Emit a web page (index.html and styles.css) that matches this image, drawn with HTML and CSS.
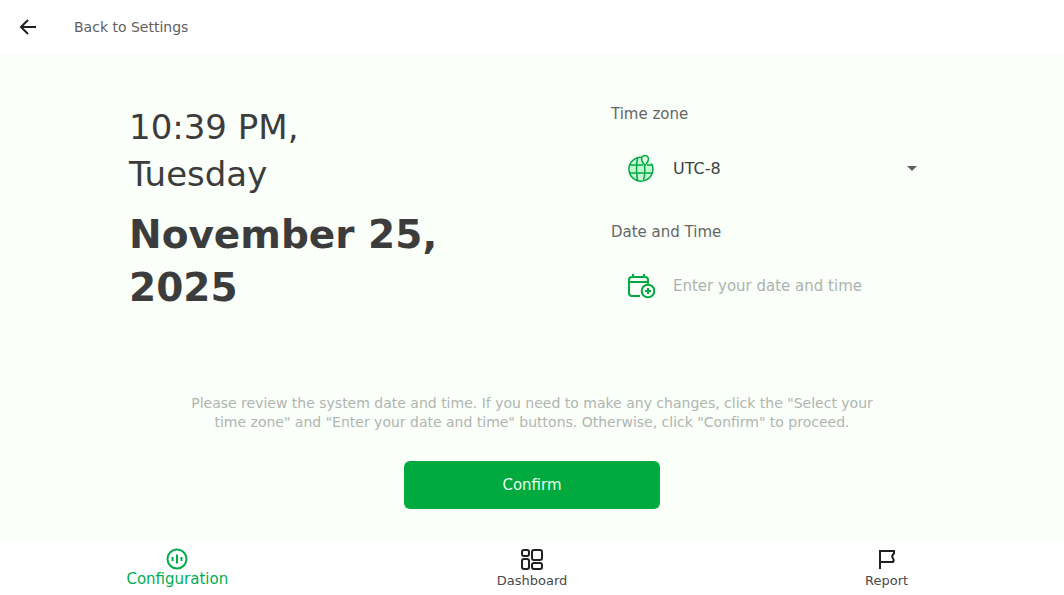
FILE: index.html
```html
<!DOCTYPE html>
<html lang="en">
<head>
<meta charset="utf-8">
<meta name="viewport" content="width=device-width, initial-scale=1">
<title>Date and Time</title>
<link rel="stylesheet" href="styles.css">
</head>
<body>
<header class="topbar">
  <a class="back" href="#">
    <svg class="back-icon" viewBox="0 0 18 18" aria-hidden="true"><path d="M17 9H2M9 2L2 9l7 7"/></svg>
    <span>Back to Settings</span>
  </a>
</header>
<main class="content">
  <div class="columns">
    <section class="clock">
      <p class="clock-time">10:39 PM,<br>Tuesday</p>
      <h1 class="clock-date">November 25,<br>2025</h1>
    </section>
    <form class="fields">
      <div class="field">
        <label class="label" for="zone">Time zone</label>
        <div class="control">
          <svg class="icon" viewBox="0 0 28 28" aria-hidden="true">
            <circle class="tint" cx="14" cy="15" r="12"/>
            <path d="M15 3.200A12 12 0 1 0 24.500 9.500M3 11h13M20 11h5M3 19h22M10.500 4Q8.500 15 10.500 26M17.500 12Q18.500 20 16.500 26"/>
            <path class="pin" d="M18 11.500C16 9 14.500 7.500 14.500 5a3.500 3.500 0 0 1 7 0C21.500 7.500 20 9 18 11.500Z"/>
          </svg>
          <select class="input zone" id="zone"><option>UTC-8</option></select>
          <svg class="caret" viewBox="0 0 10 5" aria-hidden="true"><path d="M0 0h10L5 5z"/></svg>
        </div>
      </div>
      <div class="field">
        <label class="label" for="when">Date and Time</label>
        <div class="control">
          <svg class="icon" viewBox="0 0 28 28" aria-hidden="true">
            <path class="bold" d="M13 24H5q-3 0-3-3V8q0-3 3-3h13q3 0 3 3v4M2 10h19M6 2v3M17 2v3"/>
            <circle class="bold" cx="21" cy="19" r="6.300"/>
            <path class="bold" d="M18 19h6M21 16v6"/>
          </svg>
          <input class="input" id="when" type="text" placeholder="Enter your date and time">
        </div>
      </div>
    </form>
  </div>
  <p class="hint">Please review the system date and time. If you need to make any changes, click the "Select your<br>time zone" and "Enter your date and time" buttons. Otherwise, click "Confirm" to proceed.</p>
  <button class="confirm" type="button">Confirm</button>
</main>
<nav class="tabs" aria-label="Main">
  <a class="tab active" href="#" aria-current="page">
    <svg class="tab-icon" viewBox="0 0 22 22" aria-hidden="true"><circle cx="11" cy="11" r="9.500"/><path d="M6.500 9v4M11 6.500v9M15.500 9v4"/></svg>
    <span>Configuration</span>
  </a>
  <a class="tab" href="#">
    <svg class="tab-icon" viewBox="0 0 22 22" aria-hidden="true"><rect x="1" y="2" width="7" height="6" rx="2"/><rect x="11" y="2" width="10" height="10" rx="2"/><rect x="1" y="11" width="7" height="10" rx="2"/><rect x="11" y="15" width="10" height="6" rx="2"/></svg>
    <span>Dashboard</span>
  </a>
  <a class="tab" href="#">
    <svg class="tab-icon" viewBox="0 0 22 22" aria-hidden="true"><path d="M4 21V3H18V5.500Q15.500 7.500 16.500 9.500Q18.500 12 17 14H4"/></svg>
    <span>Report</span>
  </a>
</nav>
</body>
</html>
```
FILE: styles.css
```css
* { box-sizing: border-box; }

body {
  display: flex;
  flex-direction: column;
  min-height: 100vh;
  margin: 0;
  background: #fff;
  color: #3c3c3c;
  font-family: "DejaVu Sans", sans-serif;
}

p, h1 { margin: 0; }
a { color: inherit; text-decoration: none; }

svg {
  flex: none;
  fill: none;
  stroke: currentColor;
  stroke-width: 2;
}

.topbar {
  display: flex;
  align-items: center;
  height: 54px;
  padding: 0 19px;
}

.back {
  display: flex;
  align-items: center;
  gap: 37px;
  color: #606060;
  font-size: 14px;
}

.back-icon { width: 18px; height: 18px; color: #202020; }

.content {
  flex: 1;
  display: flex;
  flex-direction: column;
  align-items: center;
  padding: 50px 0 33px;
  background: #fafffa;
}

.columns {
  display: grid;
  grid-template-columns: 482fr 453fr;
  width: 100%;
  padding-left: 129px;
}

.clock-time { font-size: 34px; line-height: 47px; }
.clock-date { margin-top: 10px; font-size: 39px; line-height: 53px; }

.fields {
  display: flex;
  flex-direction: column;
  gap: 28px;
  width: 70%;
  color: #666;
}

.label { display: block; margin-bottom: 18px; font-size: 15px; line-height: 20px; }

.control {
  display: flex;
  align-items: center;
  gap: 18px;
  height: 52px;
  padding: 0 11px 0 16px;
}

.icon { width: 28px; height: 28px; color: #00aa40; stroke-width: 1.500; }
.tint { fill: #c4f5d5; stroke: none; }
.pin { fill: #dcfbe5; }
.bold { stroke-width: 2; }

.input {
  flex: 1;
  min-width: 0;
  padding: 0;
  border: 0;
  outline: 0;
  background: transparent;
  color: #404040;
  font-family: inherit;
  font-size: 15px;
}

.zone { appearance: none; font-size: 16px; }
.input::placeholder { color: #adb3ad; opacity: 1; }
.caret { width: 10px; height: 5px; margin-left: -18px; fill: #606060; stroke: none; pointer-events: none; }

.hint {
  margin-top: auto;
  color: #b0b5b0;
  font-size: 14px;
  line-height: 19px;
  text-align: center;
}

.confirm {
  width: 24%;
  height: 48px;
  margin-top: 29px;
  border: 0;
  border-radius: 6px;
  background: #00aa3e;
  color: #e4ffed;
  font-family: inherit;
  font-size: 15px;
}

.tabs {
  display: grid;
  grid-template-columns: repeat(3, 1fr);
  height: 53px;
}

.tab {
  display: flex;
  flex-direction: column;
  align-items: center;
  gap: 3px;
  padding-top: 6px;
  color: #484848;
  font-size: 13px;
}

.tab-icon { width: 22px; height: 22px; color: #202020; }
.active { gap: 0; color: #00ae50; font-size: 15px; }
.active .tab-icon { color: #00aa48; }
```
